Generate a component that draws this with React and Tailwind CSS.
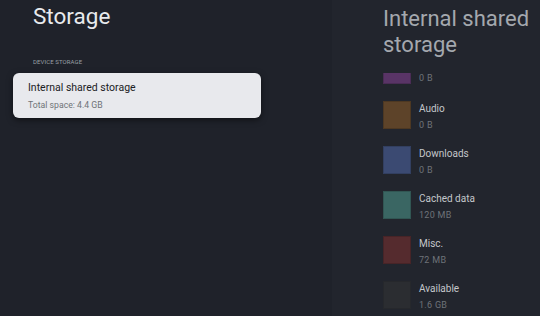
import React from "react";

const items = [
  { label: "", size: "0 B", color: "bg-[#593466]", border: "border-[#4a2c55]" },
  { label: "Audio", size: "0 B", color: "bg-[#5d4329]", border: "border-[#4d3822]" },
  { label: "Downloads", size: "0 B", color: "bg-[#3b4a72]", border: "border-[#323f60]" },
  { label: "Cached data", size: "120 MB", color: "bg-[#3a6663]", border: "border-[#315653]" },
  { label: "Misc.", size: "72 MB", color: "bg-[#552b2e]", border: "border-[#472427]" },
  { label: "Available", size: "1.6 GB", color: "bg-[#2b2d31]", border: "border-[#26282c]" },
];

export default function App() {
  return (
    <div
      className="flex w-[540px] h-[316px] overflow-hidden"
      style={{ fontFamily: "Roboto, 'Noto Sans', sans-serif" }}
    >
      <div className="w-[332px] h-full bg-[#1f222a] flex flex-col">
        <div className="pl-[33px] pt-[5px] text-[22.5px] leading-[22px] text-[#e8eaed]">Storage</div>
        <div className="pl-[33px] mt-[31px] text-[6px] leading-[8px] text-[#9aa0a6] tracking-[0.1px]">
          DEVICE STORAGE
        </div>
        <div className="ml-[13px] mt-[7px] w-[248px] h-[45px] rounded-[6px] bg-[#e8e9ed] shadow-[0_2px_6px_rgba(0,0,0,0.5)] pl-[15px] pt-[8px] flex flex-col">
          <div className="text-[10.5px] leading-[14px] text-[#202124]">Internal shared storage</div>
          <div className="mt-[4px] text-[8.7px] leading-[12px] text-[#6f7378]">Total space: 4.4 GB</div>
        </div>
      </div>
      <div className="flex-1 h-full bg-[#22252d] flex flex-col pl-[51px]">
        <div className="pt-[6px] text-[22px] leading-[26px] text-[#a4a8ae]">
          Internal shared
          <br />
          storage
        </div>
        <div className="mt-[15px] flex-1 overflow-hidden">
          <div className="-mt-[17px] flex flex-col gap-[17px]">
            {items.map((it) => (
              <div key={it.size + it.label} className="flex gap-[8px] h-[28px]">
                <div className={`w-[28px] h-[28px] shrink-0 border ${it.color} ${it.border}`} />
                <div className="flex flex-col pt-[1px]">
                  <div className="h-[14px] text-[10px] leading-[14px] text-[#c4c7cb]">{it.label}</div>
                  <div className="mt-[3px] text-[9px] leading-[12px] text-[#6f7379] tracking-[0.3px]">{it.size}</div>
                </div>
              </div>
            ))}
          </div>
        </div>
      </div>
    </div>
  );
}
